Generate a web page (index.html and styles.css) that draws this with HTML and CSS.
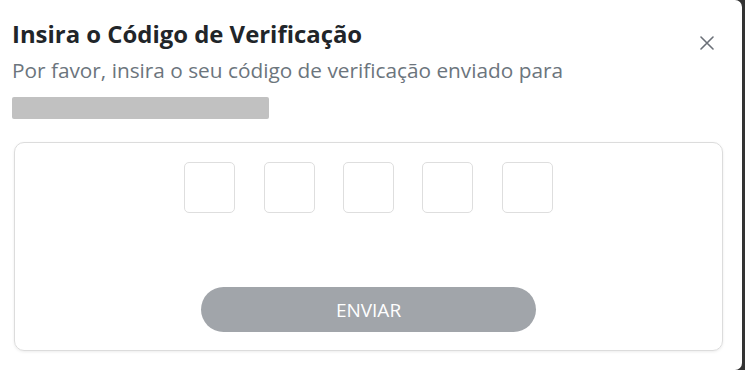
FILE: index.html
```html
<!DOCTYPE html>
<html lang="pt">
<head>
<meta charset="utf-8">
<title>Código de Verificação</title>
<link rel="stylesheet" href="styles.css">
</head>
<body>
<div class="modal">
  <div class="modal-header">
    <div class="heading">
      <h2 class="title">Insira o Código de Verificação</h2>
      <p class="subtitle">Por favor, insira o seu código de verificação enviado para</p>
      <div class="masked"></div>
    </div>
    <button class="close" aria-label="Fechar">
      <svg width="14" height="14" viewBox="0 0 14 14"><path d="M1 1L13 13M13 1L1 13" stroke="currentColor" stroke-width="1.6" stroke-linecap="round"/></svg>
    </button>
  </div>
  <div class="card">
    <div class="code-inputs">
      <input class="digit" maxlength="1">
      <input class="digit" maxlength="1">
      <input class="digit" maxlength="1">
      <input class="digit" maxlength="1">
      <input class="digit" maxlength="1">
    </div>
    <button class="submit">ENVIAR</button>
  </div>
</div>
</body>
</html>
```

FILE: styles.css
```css
html, body {
  margin: 0;
  padding: 0;
}
body {
  background: #333333;
  width: 745px;
  height: 370px;
  overflow: hidden;
  font-family: "Open Sans", "Noto Sans", sans-serif;
}
.modal {
  width: 742px;
  height: 370px;
  background: #ffffff;
  border-radius: 0 7px 7px 0;
  box-sizing: border-box;
  padding: 18px 19px 0 12px;
  display: flex;
  flex-direction: column;
}
.modal-header {
  display: flex;
  justify-content: space-between;
  align-items: flex-start;
  padding-right: 9px;
}
.title {
  margin: 0;
  font-size: 23.9px;
  line-height: 32px;
  font-weight: 700;
  color: #212529;
}
.subtitle {
  margin: 6px 0 0;
  font-size: 20.8px;
  line-height: 28px;
  color: #6c757d;
}
.masked {
  width: 257px;
  height: 22px;
  margin-top: 13px;
  background: #c1c1c1;
  border-radius: 2px;
}
.close {
  margin: 18px 0 0;
  padding: 0;
  border: 0;
  background: none;
  color: #6b7078;
  width: 14px;
  height: 14px;
  display: flex;
}
.card {
  margin: 23px 0 0 2px;
  height: 209px;
  box-sizing: border-box;
  border: 1px solid #dcdcdc;
  border-radius: 10px;
  box-shadow: 0 1px 3px rgba(0, 0, 0, 0.08);
  display: flex;
  flex-direction: column;
  align-items: center;
  padding-top: 19px;
}
.code-inputs {
  display: flex;
  gap: 28.3px;
}
.digit {
  width: 51px;
  height: 51px;
  box-sizing: border-box;
  border: 1px solid #dedede;
  border-radius: 5px;
  padding: 0;
  text-align: center;
  font-size: 20px;
  font-family: inherit;
}
.submit {
  margin-top: 74px;
  width: 335px;
  height: 45px;
  border: 0;
  border-radius: 23px;
  background: #a1a5aa;
  color: #ffffff;
  font-family: inherit;
  font-size: 19px;
}
```
